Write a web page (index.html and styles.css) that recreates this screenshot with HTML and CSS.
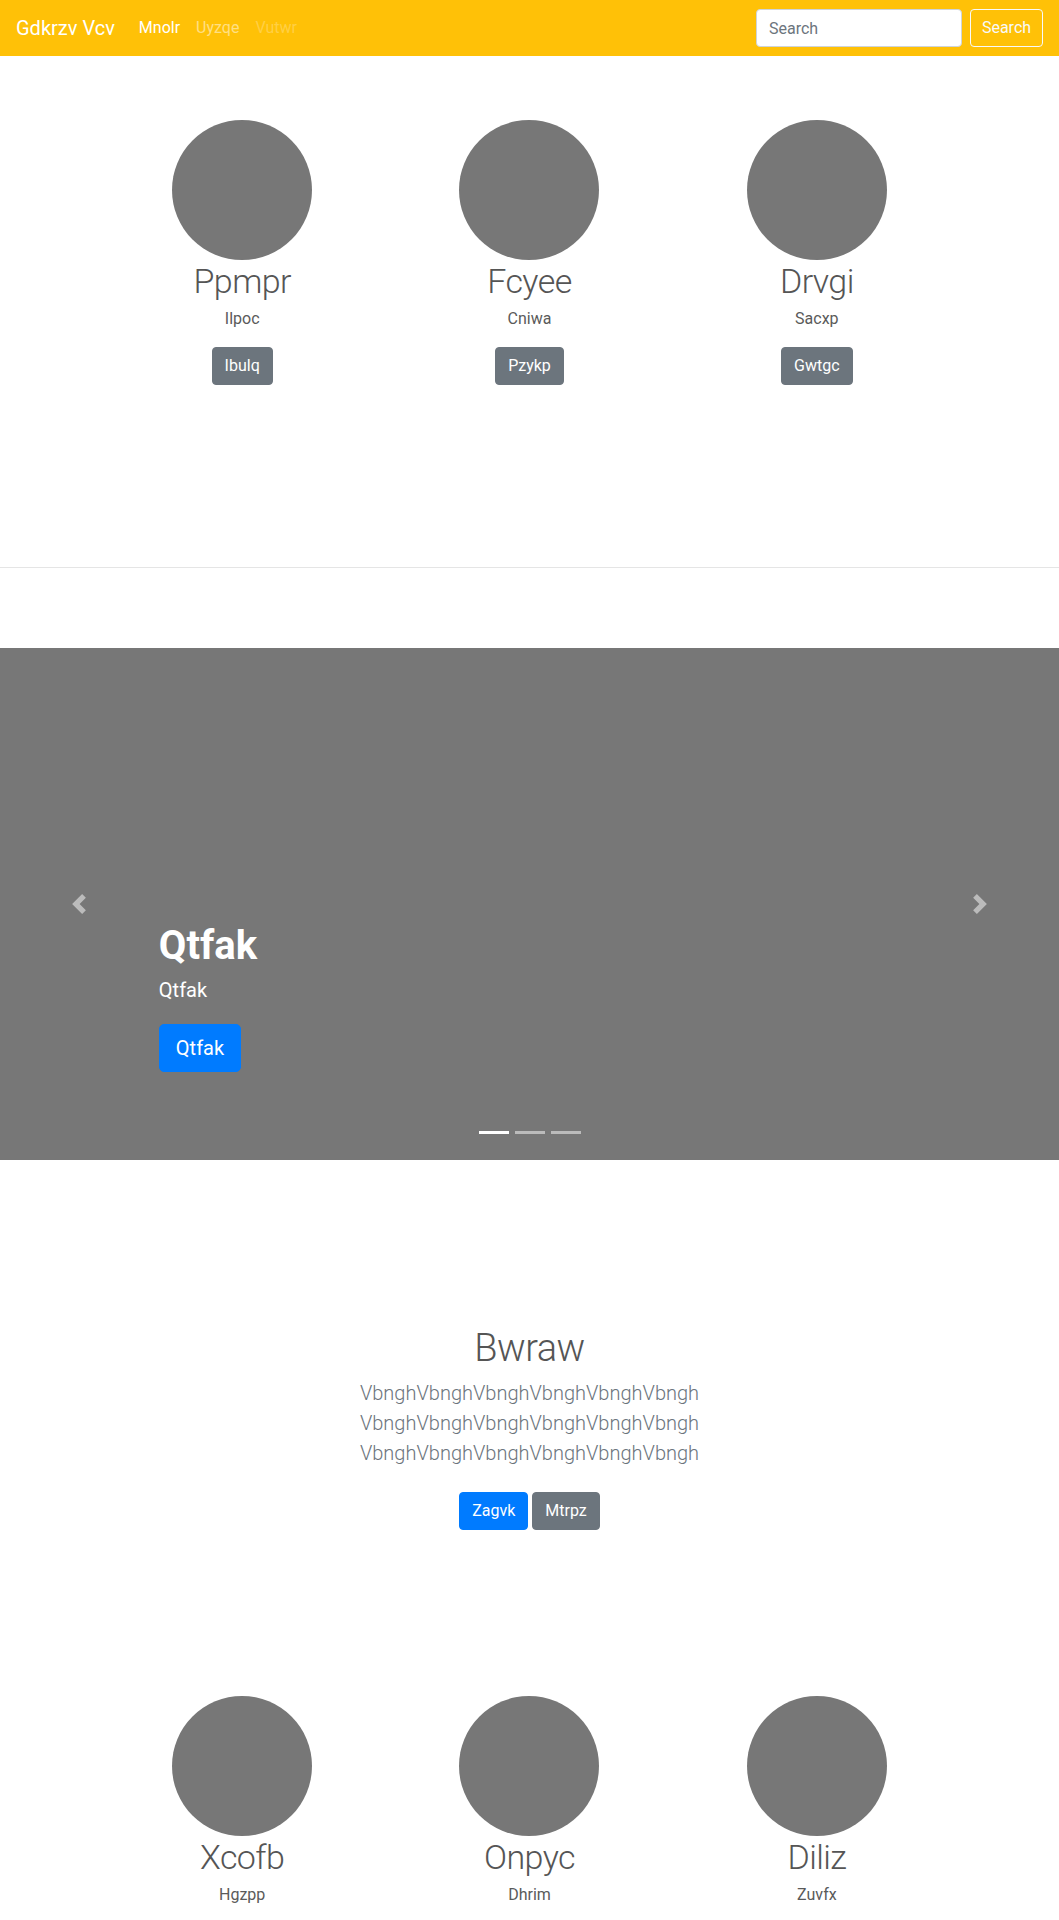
FILE: index.html
```html
<!DOCTYPE html>
<html lang="en">
<head>
<meta charset="utf-8">
<title>Gdkrzv Vcv</title>
<link rel="stylesheet" href="styles.css">
</head>
<body>
<nav class="navbar">
  <a class="brand" href="#">Gdkrzv Vcv</a>
  <ul class="nav">
    <li><a class="nav-link active" href="#">Mnolr</a></li>
    <li><a class="nav-link" href="#">Uyzqe</a></li>
    <li><a class="nav-link disabled" href="#">Vutwr</a></li>
  </ul>
  <form class="search">
    <input class="search-input" type="text" placeholder="Search">
    <button class="btn btn-outline-light search-btn" type="button">Search</button>
  </form>
</nav>

<section class="marketing marketing-top">
  <div class="col">
    <div class="avatar"></div>
    <h2 class="col-title">Ppmpr</h2>
    <p class="col-text">Ilpoc</p>
    <p class="col-action"><a class="btn btn-secondary" href="#">Ibulq</a></p>
  </div>
  <div class="col">
    <div class="avatar"></div>
    <h2 class="col-title">Fcyee</h2>
    <p class="col-text">Cniwa</p>
    <p class="col-action"><a class="btn btn-secondary" href="#">Pzykp</a></p>
  </div>
  <div class="col">
    <div class="avatar"></div>
    <h2 class="col-title">Drvgi</h2>
    <p class="col-text">Sacxp</p>
    <p class="col-action"><a class="btn btn-secondary" href="#">Gwtgc</a></p>
  </div>
</section>

<hr class="divider">

<div class="carousel">
  <a class="carousel-control prev" href="#">
    <svg viewBox="0 0 8 8" width="20" height="20"><path fill="#fff" d="M5.25 0l-4 4 4 4 1.5-1.5-2.5-2.5 2.5-2.5-1.5-1.5z"/></svg>
  </a>
  <div class="carousel-caption">
    <h1 class="caption-title">Qtfak</h1>
    <p class="caption-text">Qtfak</p>
    <p class="caption-action"><a class="btn btn-lg btn-primary" href="#">Qtfak</a></p>
  </div>
  <a class="carousel-control next" href="#">
    <svg viewBox="0 0 8 8" width="20" height="20"><path fill="#fff" d="M2.75 0l-1.5 1.5 2.5 2.5-2.5 2.5 1.5 1.5 4-4-4-4z"/></svg>
  </a>
  <ol class="indicators">
    <li class="active"></li>
    <li></li>
    <li></li>
  </ol>
</div>

<section class="jumbotron">
  <div class="jumbo-inner">
    <h1 class="jumbo-title">Bwraw</h1>
    <p class="lead">VbnghVbnghVbnghVbnghVbnghVbngh VbnghVbnghVbnghVbnghVbnghVbngh VbnghVbnghVbnghVbnghVbnghVbngh</p>
    <p class="jumbo-actions"><a class="btn btn-primary" href="#">Zagvk</a> <a class="btn btn-secondary" href="#">Mtrpz</a></p>
  </div>
</section>

<section class="marketing marketing-bottom">
  <div class="col">
    <div class="avatar"></div>
    <h2 class="col-title">Xcofb</h2>
    <p class="col-text">Hgzpp</p>
    <p class="col-action"><a class="btn btn-secondary" href="#">Kqxry</a></p>
  </div>
  <div class="col">
    <div class="avatar"></div>
    <h2 class="col-title">Onpyc</h2>
    <p class="col-text">Dhrim</p>
    <p class="col-action"><a class="btn btn-secondary" href="#">Wlsen</a></p>
  </div>
  <div class="col">
    <div class="avatar"></div>
    <h2 class="col-title">Diliz</h2>
    <p class="col-text">Zuvfx</p>
    <p class="col-action"><a class="btn btn-secondary" href="#">Tmobv</a></p>
  </div>
</section>
</body>
</html>
```

FILE: styles.css
```css
* { box-sizing: border-box; }

html, body {
  margin: 0;
  padding: 0;
}

body {
  font-family: Roboto, "Noto Sans", "Liberation Sans", sans-serif;
  font-size: 16px;
  line-height: 1.5;
  color: #5a5a5a;
  background: #fff;
}

a { text-decoration: none; }

/* Navbar */
.navbar {
  height: 56px;
  padding: 8px 16px;
  background: #ffc107;
  display: flex;
  align-items: center;
}

.brand {
  font-size: 20px;
  line-height: 30px;
  padding: 5px 0;
  margin-right: 16px;
  color: #fff;
  white-space: nowrap;
}

.nav {
  list-style: none;
  margin: 0;
  padding: 0;
  display: flex;
}

.nav-link {
  display: block;
  padding: 8px;
  line-height: 24px;
  color: rgba(255, 255, 255, 0.5);
}

.nav-link.active { color: #fff; }
.nav-link.disabled { color: rgba(255, 255, 255, 0.25); }

.search {
  margin-left: auto;
  display: flex;
  align-items: center;
  gap: 8px;
}

.search-input {
  width: 206px;
  height: 38px;
  padding: 6px 12px;
  font-family: inherit;
  font-size: 16px;
  line-height: 24px;
  color: #495057;
  background: #fff;
  border: 1px solid #ced4da;
  border-radius: 4px;
  outline: none;
}

.search-input::placeholder { color: #6c757d; }

/* Buttons */
.btn {
  display: inline-block;
  padding: 6px 12px;
  font-family: inherit;
  font-size: 16px;
  line-height: 24px;
  border: 1px solid transparent;
  border-radius: 4px;
  color: #fff;
  background: transparent;
  vertical-align: middle;
  cursor: pointer;
}

.btn-outline-light {
  color: #f8f9fa;
  border-color: #f8f9fa;
}

.search-btn {
  width: 73px;
  padding: 6px 0;
  text-align: center;
}

.btn-secondary {
  background: #6c757d;
  border-color: #6c757d;
}

.btn-primary {
  background: #007bff;
  border-color: #007bff;
}

.btn-lg {
  padding: 8px 16px;
  font-size: 20px;
  line-height: 30px;
  border-radius: 5px;
}

/* Marketing columns */
.marketing {
  width: 862px;
  margin: 0 auto;
  display: grid;
  grid-template-columns: repeat(3, 1fr);
  text-align: center;
}

.marketing-top {
  padding-top: 64px;
  padding-bottom: 102px;
}

.marketing-bottom {
  padding-top: 49px;
  padding-bottom: 40px;
}

.avatar {
  width: 140px;
  height: 140px;
  margin: 0 auto;
  border-radius: 50%;
  background: #777;
}

.col-title {
  margin: 1px 0 5px;
  font-size: 34px;
  line-height: 1.2;
  font-weight: 300;
  letter-spacing: -0.6px;
  color: #555;
}

.col-text {
  margin: 0 0 16px;
  color: #5a5a5a;
}

.col-action { margin: 0; }

/* Divider */
.divider {
  margin: 80px 0;
  border: 0;
  border-top: 1px solid rgba(0, 0, 0, 0.1);
}

/* Carousel */
.carousel {
  position: relative;
  height: 512px;
  background: #777;
}

.carousel-control {
  position: absolute;
  top: 0;
  bottom: 0;
  width: 15%;
  display: flex;
  align-items: center;
  justify-content: center;
  opacity: 0.5;
}

.carousel-control.prev { left: 0; }
.carousel-control.next { right: 0; }

.carousel-caption {
  position: absolute;
  left: 15%;
  right: 15%;
  bottom: 48px;
  padding: 20px 0;
  color: #fff;
  text-align: left;
}

.caption-title {
  margin: 0 0 6px;
  font-size: 40px;
  line-height: 1.2;
  font-weight: 700;
}

.caption-text {
  margin: 0 0 20px;
  font-size: 20px;
  line-height: 1.4;
}

.caption-action { margin: 0 0 20px; }

.indicators {
  position: absolute;
  left: 0;
  right: 0;
  bottom: 26px;
  margin: 0;
  padding: 0;
  list-style: none;
  display: flex;
  justify-content: center;
}

.indicators li {
  width: 30px;
  height: 3px;
  margin: 0 3px;
  background: rgba(255, 255, 255, 0.5);
}

.indicators li.active { background: #fff; }

/* Jumbotron */
.jumbotron {
  margin-top: 64px;
  padding: 99px 0 93px;
  text-align: center;
}

.jumbo-inner {
  max-width: 640px;
  margin: 0 auto;
  padding: 0 15px;
}

.jumbo-title {
  margin: 3px 0 7px;
  font-size: 38px;
  line-height: 1.2;
  font-weight: 300;
  letter-spacing: -0.5px;
  color: #555;
}

.lead {
  margin: 0 0 16px;
  font-size: 20px;
  line-height: 1.5;
  font-weight: 300;
  color: #6c757d;
}

.jumbo-actions { margin: 0 0 16px; }

.jumbo-actions .btn { margin: 8px 0; }
```
